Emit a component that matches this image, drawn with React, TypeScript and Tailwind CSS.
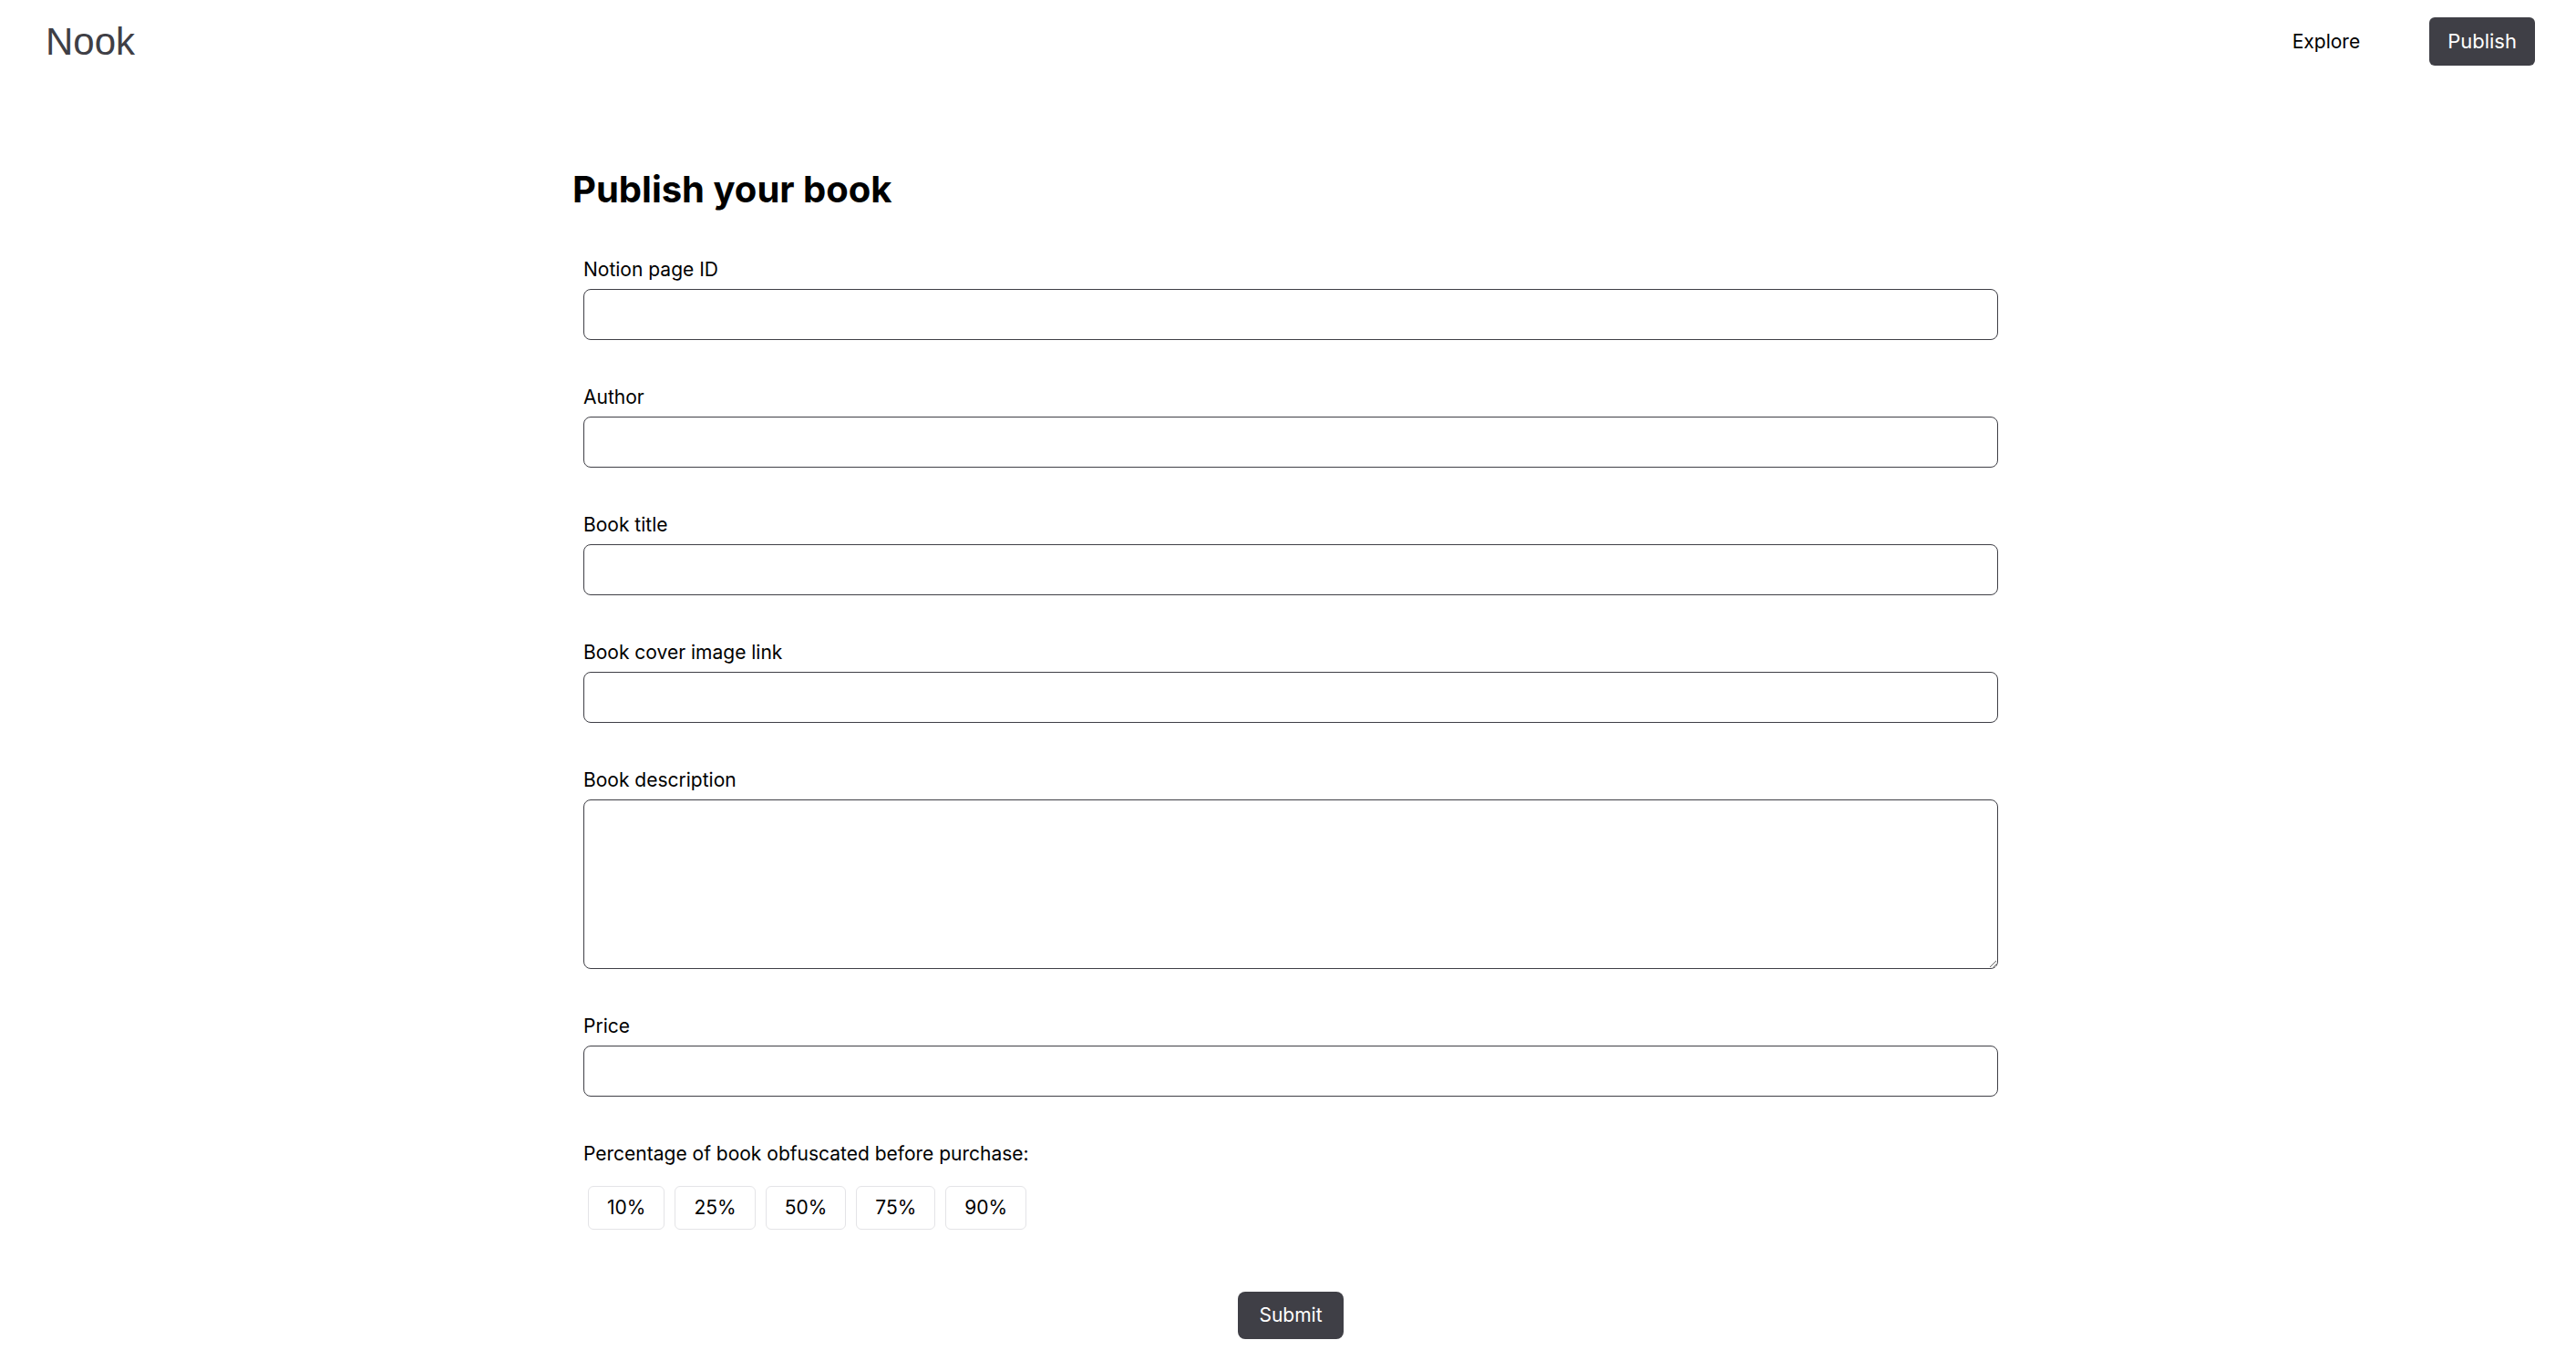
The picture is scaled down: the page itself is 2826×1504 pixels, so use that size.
import React, { useState } from "react";

const fields = [
  { label: "Notion page ID", name: "notionId" },
  { label: "Author", name: "author" },
  { label: "Book title", name: "title" },
  { label: "Book cover image link", name: "cover" },
];

const percents = ["10%", "25%", "50%", "75%", "90%"];

const App = () => {
  const [values, setValues] = useState<Record<string, string>>({});
  const [percent, setPercent] = useState("");

  const update = (name: string, v: string) =>
    setValues((prev) => ({ ...prev, [name]: v }));

  return (
    <div className="min-h-screen bg-white text-black font-['Inter',sans-serif]">
      <nav className="flex items-center justify-between h-[91px] pl-[50px] pr-[45px]">
        <a className="text-[42px] text-[#3f3f46] font-['Liberation_Sans',sans-serif] leading-none">
          Nook
        </a>
        <div className="flex items-center gap-[76px]">
          <a className="text-[21px] text-black">Explore</a>
          <button className="bg-[#3f3f46] text-white text-[22px] px-[20px] h-[53px] rounded-[6px]">
            Publish
          </button>
        </div>
      </nav>

      <main className="w-[1582px] mx-auto pt-[97px]">
        <h1 className="text-[40px] font-bold leading-none pl-[6px]">
          Publish your book
        </h1>

        <form className="mt-[53px] pl-[18px] pr-[12px] flex flex-col gap-[48px]">
          {fields.map((f) => (
            <div key={f.name} className="flex flex-col">
              <label className="text-[21px] leading-[30px] mb-[6px]">{f.label}</label>
              <input
                type="text"
                value={values[f.name] || ""}
                onChange={(e) => update(f.name, e.target.value)}
                className="h-[56px] w-full border border-[#3f3f46] rounded-[8px] px-[12px] text-[21px] outline-none"
              />
            </div>
          ))}
          <div className="flex flex-col">
            <label className="text-[21px] leading-[30px] mb-[6px]">Book description</label>
            <textarea
              value={values.description || ""}
              onChange={(e) => update("description", e.target.value)}
              className="h-[186px] w-full border border-[#3f3f46] rounded-[8px] px-[12px] py-[10px] text-[21px] outline-none"
            />
          </div>
          <div className="flex flex-col">
            <label className="text-[21px] leading-[30px] mb-[6px]">Price</label>
            <input
              type="text"
              value={values.price || ""}
              onChange={(e) => update("price", e.target.value)}
              className="h-[56px] w-full border border-[#3f3f46] rounded-[8px] px-[12px] text-[21px] outline-none"
            />
          </div>
          <div className="flex flex-col">
            <label className="text-[21px] leading-[30px]">
              Percentage of book obfuscated before purchase:
            </label>
            <div className="flex gap-[11px] mt-[20px] pl-[5px]">
              {percents.map((p) => (
                <button
                  type="button"
                  key={p}
                  onClick={() => setPercent(p)}
                  className={
                    "h-[48px] px-[20px] border rounded-[6px] text-[21px] " +
                    (percent === p ? "border-[#3f3f46]" : "border-[#e4e4e7]")
                  }
                >
                  {p}
                </button>
              ))}
            </div>
          </div>
          <div className="flex justify-center mt-[20px]">
            <button
              type="submit"
              className="bg-[#3f3f46] text-white text-[21px] h-[52px] px-[23px] rounded-[8px]"
            >
              Submit
            </button>
          </div>
        </form>
      </main>
    </div>
  );
};

export default App;
